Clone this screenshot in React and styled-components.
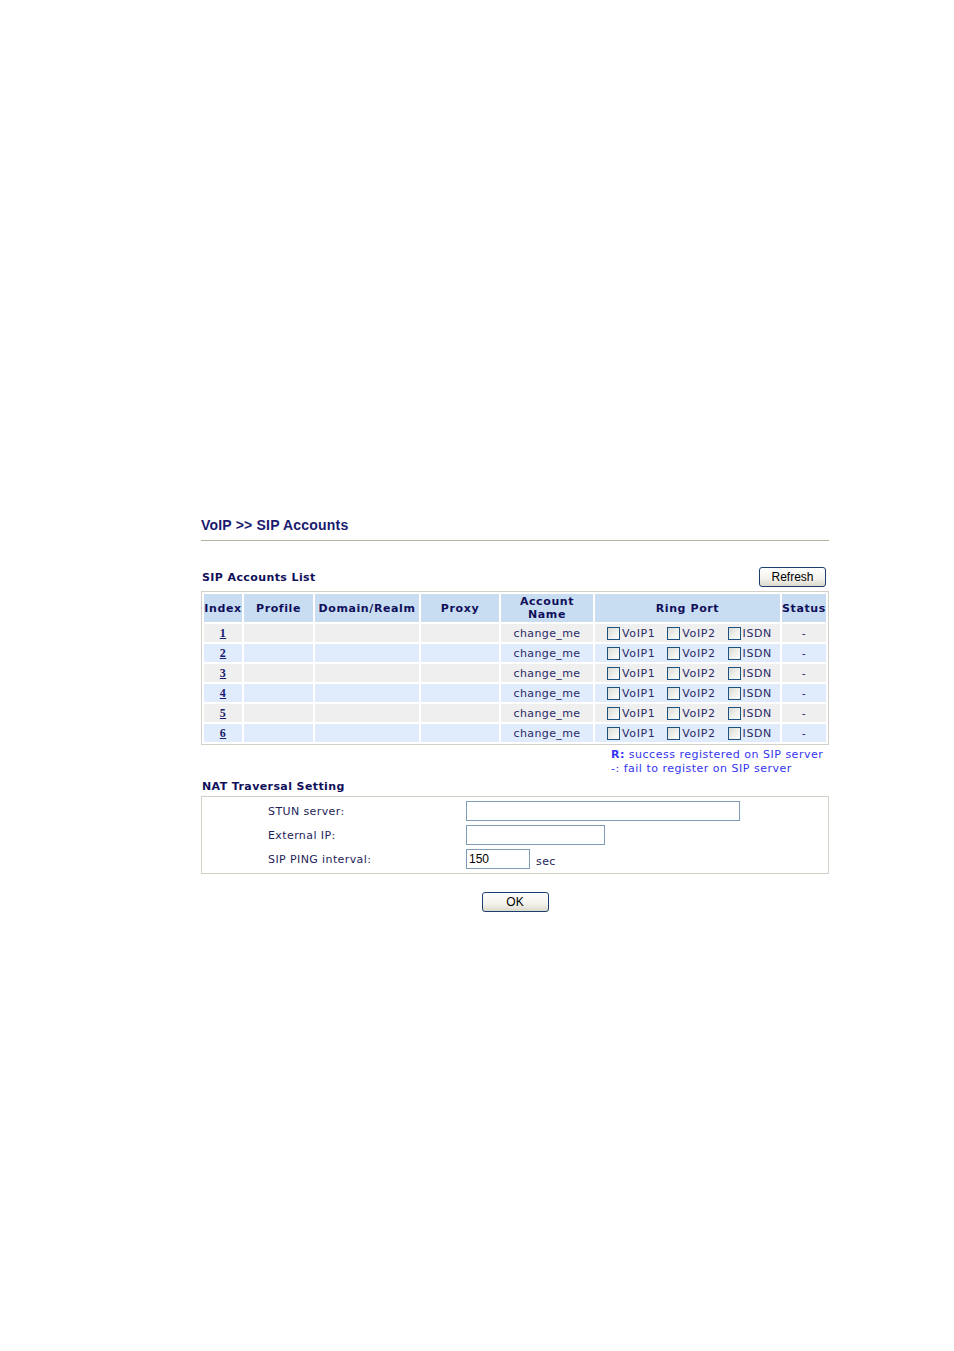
import styled, { createGlobalStyle } from 'styled-components';

const GlobalStyle = createGlobalStyle`
  body {
    margin: 0;
    background: #fff;
    font-family: "DejaVu Sans", Verdana, sans-serif;
    color: #1e1e5a;
  }
`;

const accounts = [1, 2, 3, 4, 5, 6];
const ports = ['VoIP1', 'VoIP2', 'ISDN'];

const Page = styled.div`
  width: 628px;
  margin-left: 201px;
  padding-top: 515px;
  padding-bottom: 400px;
`;

const Title = styled.div`
  font-family: "Liberation Sans", Arial, sans-serif;
  font-weight: bold;
  font-size: 14px;
  letter-spacing: 0.2px;
  color: #1a1a6e;
  height: 20px;
  line-height: 20px;
  border-bottom: 1px solid #b8b4a0;
  padding-bottom: 5px;
`;

const ListHeader = styled.div`
  display: flex;
  justify-content: space-between;
  align-items: flex-end;
  margin-top: 24px;
  padding-right: 3px;
  height: 22px;
  margin-bottom: 4px;
`;

const SectionTitle = styled.div`
  font-weight: bold;
  font-size: 11px;
  letter-spacing: 0.4px;
  color: #10105a;
  padding-left: 1px;
  margin-top: ${(p) => p.mt || 0}px;
  padding-bottom: ${(p) => p.pb || 0}px;
`;

const Button = styled.button`
  width: 67px;
  height: 20px;
  padding: 0;
  border: 1px solid #1c3f6e;
  border-radius: 3px;
  background: linear-gradient(#ffffff, #f3f2ec 60%, #dcd9cc);
  font-family: "Liberation Sans", Arial, sans-serif;
  font-size: 12px;
  color: #000;
`;

const Table = styled.table`
  width: 628px;
  table-layout: fixed;
  border: 1px solid #d4d0c8;
  border-spacing: 2px;
  font-size: 11px;
`;

const Th = styled.th`
  background: #c8ddf2;
  height: 28px;
  padding: 0;
  font-size: 11px;
  font-weight: bold;
  letter-spacing: 0.6px;
  color: #10105a;
  line-height: 13px;
  text-align: center;
  white-space: nowrap;
`;

const Row = styled.tr`
  background: ${(p) => (p.alt ? '#e0ecfc' : '#efefef')};
`;

const Td = styled.td`
  height: 18px;
  padding: 0;
  text-align: center;
  color: #2a2a66;
  letter-spacing: 0.4px;
  white-space: nowrap;
`;

const IndexLink = styled.a`
  font-family: "Liberation Serif", "Times New Roman", serif;
  font-weight: bold;
  font-size: 12px;
  color: #1a1a6e;
  text-decoration: underline;
`;

const PortGroup = styled.div`
  display: flex;
  justify-content: center;
  gap: 12px;
  padding-left: 4px;
`;

const PortLabel = styled.label`
  display: inline-flex;
  align-items: center;
  gap: 2px;
  color: #2a2a66;
  letter-spacing: 0.6px;
`;

const Box = styled.span`
  display: inline-block;
  width: 11px;
  height: 11px;
  border: 1px solid #1c5180;
  background: linear-gradient(135deg, #dcdcd5, #ffffff);
`;

const Legend = styled.div`
  margin-left: 410px;
  margin-top: 3px;
  font-size: 11px;
  line-height: 14px;
  letter-spacing: 0.5px;
  color: #3535f0;
  white-space: nowrap;
  b {
    font-weight: bold;
  }
`;

const NatBox = styled.div`
  border: 1px solid #d4d0c8;
  padding: 4px 0 4px;
  display: grid;
  grid-template-columns: 264px 1fr;
  row-gap: 4px;
  margin-top: 3px;
`;

const Label = styled.div`
  padding-left: 66px;
  font-size: 11px;
  letter-spacing: 0.4px;
  color: #1e1e5a;
  display: flex;
  align-items: center;
  height: 20px;
`;

const Field = styled.div`
  display: flex;
  align-items: center;
  gap: 6px;
  font-size: 11px;
  letter-spacing: 0.4px;
  color: #1e1e5a;
`;

const Input = styled.input`
  box-sizing: border-box;
  width: ${(p) => p.w}px;
  height: 20px;
  border: 1px solid #7f9db9;
  padding: 0 2px;
  font-family: "Liberation Sans", Arial, sans-serif;
  font-size: 12px;
  color: #000;
  outline: none;
`;

const Sec = styled.span`
  padding-top: 5px;
`;

const Footer = styled.div`
  display: flex;
  justify-content: center;
  margin-top: 18px;
`;

export default function App() {
  return (
    <Page>
      <GlobalStyle />
      <Title>VoIP &gt;&gt; SIP Accounts</Title>
      <ListHeader>
        <SectionTitle pb={3}>SIP Accounts List</SectionTitle>
        <Button>Refresh</Button>
      </ListHeader>
      <Table>
        <colgroup>
          <col style={{ width: 38 }} />
          <col style={{ width: 69 }} />
          <col style={{ width: 104 }} />
          <col style={{ width: 78 }} />
          <col style={{ width: 92 }} />
          <col style={{ width: 185 }} />
          <col style={{ width: 44 }} />
        </colgroup>
        <thead>
          <tr>
            <Th>Index</Th>
            <Th>Profile</Th>
            <Th>Domain/Realm</Th>
            <Th>Proxy</Th>
            <Th>
              Account
              <br />
              Name
            </Th>
            <Th>Ring Port</Th>
            <Th>Status</Th>
          </tr>
        </thead>
        <tbody>
          {accounts.map((n) => (
            <Row key={n} alt={n % 2 === 0}>
              <Td>
                <IndexLink href="#">{n}</IndexLink>
              </Td>
              <Td />
              <Td />
              <Td />
              <Td>change_me</Td>
              <Td>
                <PortGroup>
                  {ports.map((p) => (
                    <PortLabel key={p}>
                      <Box />
                      {p}
                    </PortLabel>
                  ))}
                </PortGroup>
              </Td>
              <Td>-</Td>
            </Row>
          ))}
        </tbody>
      </Table>
      <Legend>
        <b>R:</b> success registered on SIP server
        <br />
        -: fail to register on SIP server
      </Legend>
      <SectionTitle mt={4}>NAT Traversal Setting</SectionTitle>
      <NatBox>
        <Label>STUN server:</Label>
        <Field>
          <Input w={274} />
        </Field>
        <Label>External IP:</Label>
        <Field>
          <Input w={139} />
        </Field>
        <Label>SIP PING interval:</Label>
        <Field>
          <Input w={64} defaultValue="150" />
          <Sec>sec</Sec>
        </Field>
      </NatBox>
      <Footer>
        <Button>OK</Button>
      </Footer>
    </Page>
  );
}
